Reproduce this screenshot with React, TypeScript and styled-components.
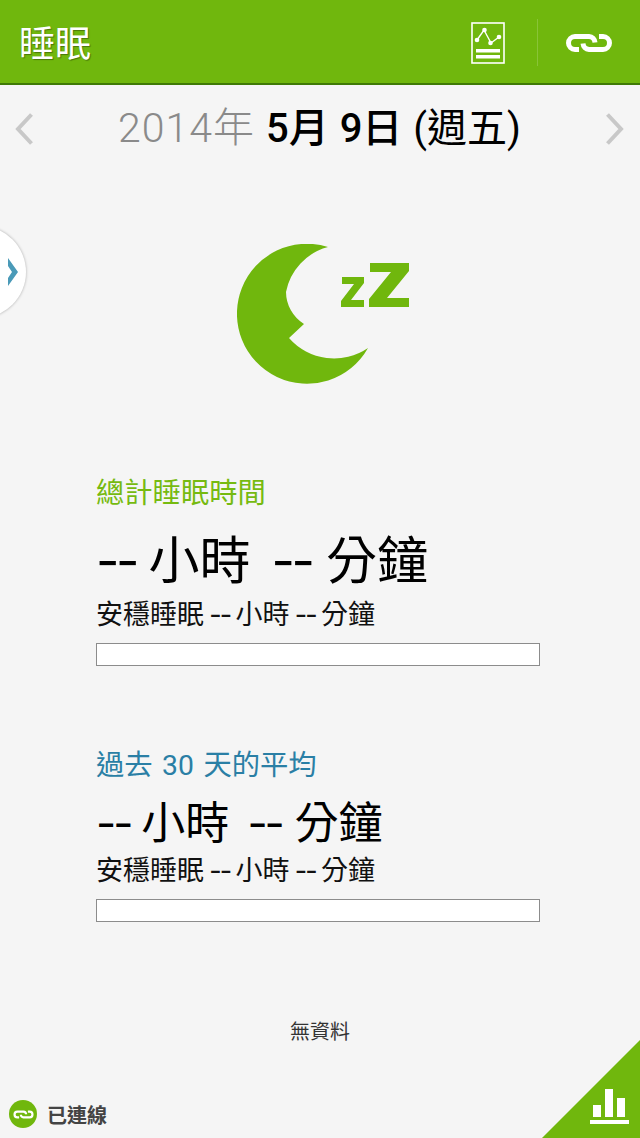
import React from "react";
import styled, { createGlobalStyle } from "styled-components";

const GREEN = "#70b70d";
const FONT = `Roboto, "Noto Sans CJK TC", sans-serif`;

const Global = createGlobalStyle`
  html, body { margin: 0; padding: 0; background: #f5f5f5; }
  body { font-family: ${FONT}; }
`;

const Page = styled.div`
  position: relative;
  width: 640px;
  height: 1138px;
  overflow: hidden;
  background: #f5f5f5;
  display: flex;
  flex-direction: column;
`;

const Header = styled.header`
  height: 81px;
  flex: none;
  background: ${GREEN};
  border-bottom: 2px solid #3f7a06;
  display: flex;
  align-items: center;
  padding: 2px 0 0 19px;
`;

const Title = styled.h1`
  margin: 0;
  flex: 1;
  font-size: 36px;
  line-height: 1;
  font-weight: 400;
  color: #fff;
  text-shadow: 1px 1px 1px rgba(0, 0, 0, 0.35);
  padding-top: 4px;
`;

const ActionButton = styled.button<{ $shift: number }>`
  width: 102px;
  height: 48px;
  padding: 0 0 0 ${(p) => p.$shift}px;
  border: 0;
  background: none;
  display: flex;
  align-items: center;
  justify-content: center;
`;

const Divider = styled.div`
  width: 1px;
  height: 47px;
  background: rgba(255, 255, 255, 0.18);
`;

const DateRow = styled.div`
  height: 87px;
  padding: 0 16px 1px 15px;
  flex: none;
  display: flex;
  align-items: center;
  justify-content: space-between;
`;

const DateText = styled.div`
  font-size: 40px;
  line-height: 1;
  color: #000;
  white-space: pre;
  word-spacing: 1px;
`;

const Year = styled.span`
  color: #8a8a8a;
  font-size: 41px;
  font-weight: 300;
  letter-spacing: 1px;
`;

const Strong = styled.span`
  font-weight: 500;
`;

const MoonWrap = styled.div`
  flex: none;
  margin-top: 71px;
  height: 142px;
  display: flex;
  justify-content: center;
  padding-left: 8px;
`;

const Section = styled.section<{ $top: number }>`
  margin: ${(p) => p.$top}px 100px 0 96px;
`;

const SectionTitle = styled.div<{ $color: string }>`
  font-size: 28.3px;
  line-height: 40px;
  word-spacing: 2.5px;
  color: ${(p) => p.$color};
`;

const Total = styled.div<{ $size: number; $height: number; $top: number; $bottom: number }>`
  font-size: ${(p) => p.$size}px;
  line-height: ${(p) => p.$height}px;
  margin: ${(p) => p.$top}px 0 ${(p) => p.$bottom}px;
  color: #000;
  white-space: pre;
`;

const Dash = styled.span<{ $second?: boolean }>`
  font-family: Inter, sans-serif;
  font-weight: 400;
  letter-spacing: -0.07em;
  margin-left: ${(p) => (p.$second ? "0.165em" : "0")};
  margin-right: ${(p) => (p.$second ? "0.04em" : "0")};
`;

const Sub = styled.div`
  font-size: 27px;
  line-height: 40px;
  color: #111;
  white-space: pre;
  word-spacing: -1.5px;
`;

const Bar = styled.div`
  box-sizing: border-box;
  height: 23px;
  margin-top: 8px;
  background: #fff;
  border: 1px solid #8c8c8c;
`;

const NoData = styled.div`
  margin-top: 95px;
  text-align: center;
  font-size: 20px;
  line-height: 30px;
  color: #333;
`;

const Footer = styled.footer`
  margin-top: auto;
  height: 48px;
  padding-top: 4px;
  display: flex;
  align-items: center;
  gap: 10px;
  padding-left: 9px;
`;

const Badge = styled.div`
  width: 28px;
  height: 28px;
  border-radius: 50%;
  background: ${GREEN};
  display: flex;
  align-items: center;
  justify-content: center;
`;

const Connected = styled.span`
  font-size: 20px;
  font-weight: 700;
  color: #444;
`;

const SideHandle = styled.div`
  position: absolute;
  left: -66px;
  top: 226px;
  width: 92px;
  height: 92px;
  border-radius: 50%;
  background: #fff;
  box-shadow: 0 0 3px rgba(0, 0, 0, 0.3);
  display: flex;
  align-items: center;
  justify-content: flex-end;
  padding-right: 7px;
  box-sizing: border-box;
`;

const Corner = styled.div`
  position: absolute;
  right: 0;
  bottom: 0;
  width: 98px;
  height: 98px;
  background: ${GREEN};
  clip-path: polygon(100% 0, 100% 100%, 0 100%);
`;

const ChartIcon = styled.svg`
  position: absolute;
  left: 47px;
  top: 47px;
`;

const Chevron = ({ dir }: { dir: "l" | "r" }) => (
  <svg width="18" height="32" viewBox="0 0 18 32">
    <path
      d={dir === "l" ? "M16.5 1.5 3 16l13.5 14.5" : "M1.5 1.5 15 16 1.5 30.5"}
      fill="none"
      stroke="#c8c8c8"
      strokeWidth="4"
    />
  </svg>
);

const LinkIcon = ({ w, h }: { w: number; h: number }) => (
  <svg width={w} height={h} viewBox="0 0 48 20">
    <path
      d="M14 16.5H10a6.5 6.5 0 0 1 0-13H24a6.5 6.5 0 0 1 6 6"
      fill="none"
      stroke="#fff"
      strokeWidth="5"
    />
    <path
      d="M34 3.5H38a6.5 6.5 0 0 1 0 13H24a6.5 6.5 0 0 1-6-6"
      fill="none"
      stroke="#fff"
      strokeWidth="5"
    />
  </svg>
);

const ReportIcon = () => (
  <svg width="34" height="42" viewBox="0 0 34 42">
    <rect x="1" y="1" width="32" height="40" fill="none" stroke="#fff" strokeWidth="1.6" />
    <path d="M6 18 13 8l7 13 8-6" fill="none" stroke="#fff" strokeWidth="1.4" />
    <circle cx="6" cy="18" r="2.3" fill="#fff" />
    <circle cx="13.5" cy="8" r="2.3" fill="#fff" />
    <circle cx="19.5" cy="21" r="2.3" fill="#fff" />
    <circle cx="28" cy="15" r="2.3" fill="#fff" />
    <rect x="5" y="27" width="24" height="3.5" fill="#fff" />
    <rect x="5" y="33" width="24" height="3.5" fill="#fff" />
  </svg>
);

const Moon = () => (
  <svg width="174" height="142" viewBox="0 0 174 142">
    <path
      d="M91 3A70 70 0 1 0 131 104A60 60 0 0 1 52 94L67 80A38 38 0 0 1 49 48A58 58 0 0 1 91 3Z"
      fill="#70b70d"
    />
    <path d="M105 33H127V39L114 56H127V63H104V57L117 40H105Z" fill="#70b70d" />
    <path d="M133 19H172V27L150 54H172V63H132V55L154 28H133Z" fill="#70b70d" />
  </svg>
);

const Duration = () => (
  <>
    <Dash>--</Dash> 小時 <Dash $second>--</Dash> 分鐘
  </>
);

const SubLine = () => (
  <Sub>
    安穩睡眠 <Dash>--</Dash> 小時 <Dash>--</Dash> 分鐘
  </Sub>
);

export default function App() {
  return (
    <Page>
      <Global />
      <Header>
        <Title>睡眠</Title>
        <ActionButton $shift={3} aria-label="report">
          <ReportIcon />
        </ActionButton>
        <Divider />
        <ActionButton $shift={0} aria-label="link">
          <LinkIcon w={48} h={20} />
        </ActionButton>
      </Header>
      <DateRow>
        <Chevron dir="l" />
        <DateText>
          <Year>2014年</Year> <Strong>5月 9日</Strong> (週五)
        </DateText>
        <Chevron dir="r" />
      </DateRow>
      <MoonWrap>
        <Moon />
      </MoonWrap>
      <Section $top={88}>
        <SectionTitle $color="#76ba10">總計睡眠時間</SectionTitle>
        <Total $size={51} $height={62} $top={16} $bottom={2}>
          <Duration />
        </Total>
        <SubLine />
        <Bar />
      </Section>
      <Section $top={80}>
        <SectionTitle $color="#2a7fa5">過去 30 天的平均</SectionTitle>
        <Total $size={44} $height={56} $top={9} $bottom={-1}>
          <Duration />
        </Total>
        <SubLine />
        <Bar />
      </Section>
      <NoData>無資料</NoData>
      <Footer>
        <Badge>
          <LinkIcon w={21} h={9} />
        </Badge>
        <Connected>已連線</Connected>
      </Footer>
      <SideHandle>
        <svg width="12" height="28" viewBox="0 0 12 28">
          <path d="M1 0 11 14 1 28V20L5 14 1 8Z" fill="#4a9ab8" />
        </svg>
      </SideHandle>
      <Corner>
        <ChartIcon width="41" height="40" viewBox="0 0 41 40">
          <rect x="4" y="18" width="8" height="12" fill="#fff" />
          <rect x="16" y="2" width="8" height="28" fill="#fff" />
          <rect x="28" y="11" width="8" height="19" fill="#fff" />
          <rect x="1" y="33" width="39" height="4" fill="#fff" />
        </ChartIcon>
      </Corner>
    </Page>
  );
}
